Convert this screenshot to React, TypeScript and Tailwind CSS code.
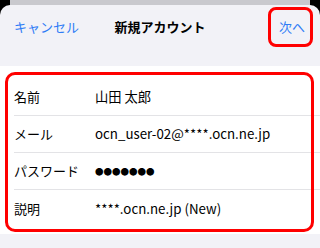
import React from "react";

const font = { fontFamily: '"Noto Sans CJK JP", "Noto Sans", sans-serif' };

const rows: { label: string; value: string }[] = [
  { label: "名前", value: "山田 太郎" },
  { label: "メール", value: "ocn_user-02@****.ocn.ne.jp" },
  { label: "パスワード", value: "●●●●●●●" },
  { label: "説明", value: "****.ocn.ne.jp (New)" },
];

export default function App() {
  return (
    <div className="relative w-[320px] h-[248px] overflow-hidden bg-black" style={font}>
      <div className="absolute left-[10px] right-[10px] top-[-10px] h-[30px] rounded-[10px] bg-[#c9c9ce]" />
      <div className="relative mt-[5px] h-[243px] rounded-t-[10px] bg-[#f2f2f7]">
        <div className="relative flex h-[44px] items-center justify-between px-[14px]">
          <span className="text-[13px] text-[#2f7cf6]">キャンセル</span>
          <span className="absolute left-1/2 -translate-x-1/2 text-[13px] font-bold text-black">新規アカウント</span>
          <span className="mr-[1px] text-[13px] text-[#2f7cf6]">次へ</span>
          <div className="absolute right-[7px] top-[2px] h-[40px] w-[45px] rounded-[8px] border-[3px] border-[#ff0000]" />
        </div>
        <div className="relative mt-[17px] bg-white pt-[13px] pb-[7px]">
          {rows.map((r, i) => (
            <div key={r.label} className="flex h-[37px] items-center pl-[14px]">
              <div
                className={`flex h-full flex-1 items-center ${i < rows.length - 1 ? "border-b border-[#e3e3e6]" : ""}`}
              >
                <span className="w-[81px] text-[13px] text-black">{r.label}</span>
                {r.label === "パスワード" ? (
                  <span className="text-[8.5px] leading-none text-black">{r.value}</span>
                ) : (
                  <span className="text-[13.3px] text-black">{r.value}</span>
                )}
              </div>
            </div>
          ))}
          <div className="pointer-events-none absolute left-[5px] right-[6px] top-[6px] bottom-[2px] rounded-[10px] border-[3px] border-[#ff0000]" />
        </div>
      </div>
    </div>
  );
}
